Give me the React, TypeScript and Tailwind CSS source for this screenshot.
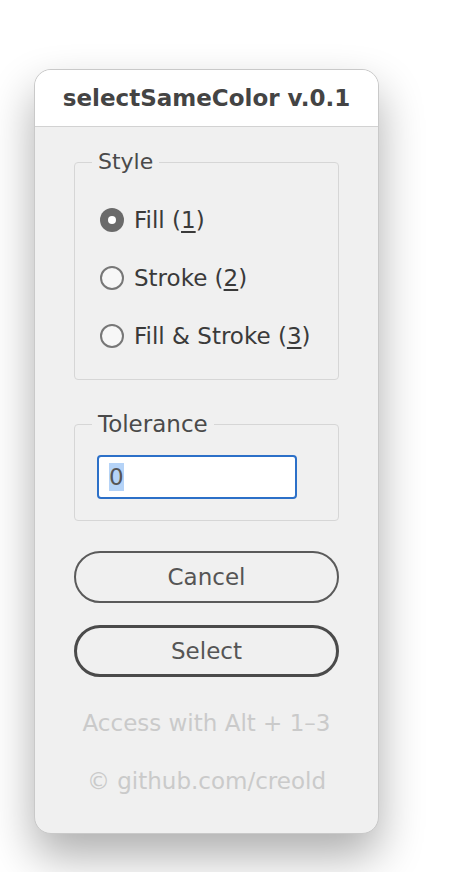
import { useState } from 'react';

const options = [
  { id: 'fill', label: 'Fill', key: '1' },
  { id: 'stroke', label: 'Stroke', key: '2' },
  { id: 'both', label: 'Fill & Stroke', key: '3' },
];

function Radio({ checked }: { checked: boolean }) {
  if (checked) {
    return (
      <span className="flex h-[24px] w-[24px] shrink-0 items-center justify-center rounded-full bg-[#6a6a6a]">
        <span className="h-[8px] w-[8px] rounded-full bg-white" />
      </span>
    );
  }
  return <span className="h-[24px] w-[24px] shrink-0 rounded-full border-2 border-[#777] bg-[#f7f7f7]" />;
}

export default function App() {
  const [style, setStyle] = useState('fill');

  return (
    <div className="min-h-screen bg-white pl-[34px] pt-[69px] font-['DejaVu_Sans',sans-serif] text-[#4a4a4a]">
      <div className="flex h-[765px] w-[345px] flex-col overflow-hidden rounded-[17px] border border-[#c9c9c9] bg-[#f0f0f0] shadow-[0_22px_45px_rgba(0,0,0,0.32)]">
        {/* title bar */}
        <div className="flex h-[57px] shrink-0 items-center justify-center border-b border-[#d2d2d2] bg-white">
          <h1 className="text-[23px] font-bold leading-[28px] text-[#444]">selectSameColor v.0.1</h1>
        </div>

        <div className="flex flex-col px-[39px] pt-[22px]">
          <fieldset className="rounded-[4px] border border-[#d6d6d6] pb-[28px] pl-[25px]">
            <legend className="-ml-[8px] px-[6px] text-[22px] leading-[26px]">Style</legend>
            <div className="mt-[30px] flex flex-col gap-[28px]">
              {options.map((o) => (
                <button
                  key={o.id}
                  onClick={() => setStyle(o.id)}
                  className="flex h-[30px] items-center gap-[10px] whitespace-nowrap text-left text-[23px] leading-[30px] text-[#3a3a3a]"
                >
                  <Radio checked={style === o.id} />
                  <span>
                    {o.label} (<span className="underline underline-offset-[3px]">{o.key}</span>)
                  </span>
                </button>
              ))}
            </div>
          </fieldset>

          <fieldset className="mt-[31px] rounded-[4px] border border-[#d6d6d6] pb-[21px] pl-[22px]">
            <legend className="-ml-[5px] px-[6px] text-[23px] leading-[26px]">Tolerance</legend>
            <div className="mt-[18px] flex h-[44px] w-[200px] items-center rounded-[4px] border-2 border-[#2c70c8] bg-white px-[10px]">
              <span className="bg-[#b5d3f7] text-[23px] leading-[28px] text-[#555]">0</span>
            </div>
          </fieldset>

          <button className="mt-[30px] h-[52px] rounded-full border-2 border-[#5a5a5a] text-[23px] leading-[28px] text-[#555]">
            Cancel
          </button>
          <button className="mt-[22px] h-[52px] rounded-full border-[3px] border-[#4a4a4a] text-[23px] leading-[28px] text-[#555]">
            Select
          </button>

          <p className="mt-[32px] whitespace-nowrap text-center text-[23px] leading-[28px] text-[#cacaca]">Access with Alt + 1–3</p>
          <p className="mt-[30px] whitespace-nowrap text-center text-[23px] leading-[28px] text-[#cacaca]">© github.com/creold</p>
        </div>
      </div>
    </div>
  );
}
